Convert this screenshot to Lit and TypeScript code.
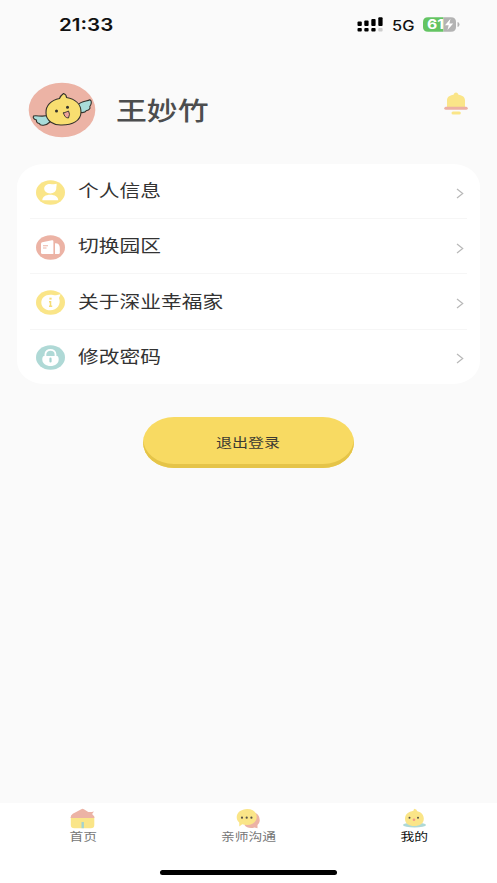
import { LitElement, html, css, svg, TemplateResult } from "lit";
import { customElement, property } from "lit/decorators.js";

const bird = html`<svg class="avatar" width="68" height="56" viewBox="0 0 68 56">
  <ellipse cx="34" cy="28" rx="33.3" ry="27.3" fill="#ecb3a5" />
  <g stroke="#34322c" stroke-width="1.1" stroke-linejoin="round" stroke-linecap="round">
    <path d="M50 23C53 18.500 59 19.500 62 17.700C64.500 19 63 23 61.800 24.500C63 27 60 28.500 58.500 28.500C57 31.500 54 31 50 30Z" fill="#a9dcda" />
    <path d="M21 33C15 35.500 9 33 5.500 34C4.500 36 6.500 37.500 8.500 38C8 40.500 10 41.500 11.500 41.500C12 44 18 44 22 40Z" fill="#a9dcda" />
    <path d="M35.500 11.500C33.500 13 32 15 31.500 16.500C23 18 17.500 24 18 31C18 39 26 43.500 34 43C44 43 53 39 53 30C53 22 47 17 38.500 15.500C38.500 13 37 12 35.500 11.500Z" fill="#f8de70" />
    <path d="M35.500 31Q38.500 30 40.500 29Q42.500 32 40.500 36Q36.500 36 35.500 31Z" fill="#eea49a" stroke-width=".9" />
  </g>
  <circle cx="28.500" cy="29" r="1.500" fill="#34322c" /><circle cx="39.500" cy="25.300" r="1.500" fill="#34322c" />
</svg>`;

const bell = html`<svg width="24" height="24" viewBox="0 0 24 24">
  <path d="M3 15V8.500C3 5 5.500 3.300 9.500 2.700C10.200 1.200 10.800 .4 12 .4C13.200 .4 13.800 1.200 14.500 2.700C18.500 3.300 21 5 21 8.500V15Z" fill="#fae588" />
  <rect x=".3" y="14.800" width="23.400" height="3" rx="1.500" fill="#ecb0a4" />
  <rect x="7.500" y="19.400" width="9.300" height="3" rx="1.500" fill="#fae588" />
</svg>`;

const glyphs: Record<string, TemplateResult> = {
  user: svg`<ellipse cx="14.500" cy="12.500" rx="14.500" ry="12.200" fill="#fae588"/>
    <path d="M20.600 3.800C20.800 5.800 20.300 6.500 20.300 8.300C20.300 11.300 17.700 13.400 14.300 13.400C10.700 13.400 8.200 11.300 8.200 8.500C8.200 5.700 10.700 3.900 14 3.900C16 3.900 18 4.700 20.600 3.800Z" fill="#fff"/>
    <path d="M6.300 20.300C6.300 16.800 9.500 14.700 14.200 14.700C18.900 14.700 22.200 16.800 22.200 20.300Z" fill="#fff"/>`,
  campus: svg`<ellipse cx="14.500" cy="12.500" rx="14.500" ry="12.200" fill="#ecb3a5"/>
    <path d="M5 8.500Q5 7.500 6.200 7.200L16 5.200Q17.400 5 17.400 6.200V19H6.500Q5 19 5 17.500Z" fill="#fff"/>
    <path d="M19 8.300Q23.800 8 23.800 13V17.500Q23.800 19 22.500 19H19Z" fill="#fff"/>
    <path d="M7 10.700H12M7 13H10.500" stroke="#ecb3a5" stroke-width="1.100"/>`,
  info: svg`<ellipse cx="14.500" cy="12.500" rx="14.500" ry="12.200" fill="#fae588"/>
    <path d="M24.500 4.300Q24 6 23 8C25.500 14 21 20.300 14.300 20.300C9 20.300 5.300 17 5.300 12.500C5.300 8 9 4.700 14.300 4.700C17 4.700 18 5.400 20 5.200Q22 5 24.500 4.300Z" fill="#fff"/>
    <rect x="13.400" y="7.700" width="2.200" height="1.900" fill="#f5dc76"/><path d="M13 11.700H14.500V16M13 16.300H16.200" fill="none" stroke="#f5dc76" stroke-width="1.500"/>`,
  lock: svg`<ellipse cx="14.500" cy="12.500" rx="14.500" ry="12.200" fill="#afd9d6"/>
    <path d="M9.400 13V9.500C9.400 3.300 19.500 3.300 19.500 9.500V13" fill="none" stroke="#fff" stroke-width="1.800"/>
    <path d="M8 11H21Q22.700 11 22.700 14.500C22.700 18.500 19 21 14.500 21C10 21 6.300 18.500 6.300 14.500Q6.300 11 8 11Z" fill="#fff"/>
    <path d="M14.500 13.700V16.500" stroke="#a5d3d0" stroke-width="2.200" stroke-linecap="round"/>`,
};

const tabGlyphs: Record<string, TemplateResult> = {
  home: svg`<path d="M.8 9H24.300V17Q24.300 20.200 20.800 20.200H4.300Q.8 20.200 .8 17Z" fill="#fae588"/>
    <path d="M.6 10Q.5 7 2.800 5.800L11.300 1.200Q12.600 .5 13.900 1.300L18.300 4Q20.800 4.300 24 3.500L22.100 6L24.300 8.500V10Z" fill="#ecb3a5"/>
    <rect x="11.500" y="14" width="2.400" height="6.200" fill="#a4d3d0"/>`,
  chat: svg`<path d="M15 5C21 3.500 24 8 23.700 13Q23.400 15.500 21.500 17V20.200L18.500 19.500C15 20.600 10 20 8.500 17Z" fill="#ecb3a5"/>
    <path d="M11.200 .9C17.200 .9 20.700 4.500 20.700 9C20.700 14 16.200 17 11.200 17Q8.200 17 6.200 16.200L3.300 18.500L3.200 14.500C1.400 13 .7 11 .7 9C.7 4.500 5.200 .9 11.200 .9Z" fill="#fae588"/>
    <g fill="#56534a"><circle cx="6" cy="9.700" r="1.100"/><circle cx="10.700" cy="9.700" r="1.100"/><circle cx="15.400" cy="9.700" r="1.100"/></g>`,
  me: svg`<ellipse cx="12.500" cy="17" rx="11.500" ry="2.400" fill="#afd9d6"/>
    <path d="M12 .8Q14.800 1.200 15.300 3.200C19.500 4 21.800 7 21.800 10.700C21.800 15.500 17.500 18 12.300 18C7 18 3 15.500 3 10.700C3 6.500 6.500 3.500 10 3.200Q12.200 3 12 .8Z" fill="#fae588"/>
    <circle cx="7.500" cy="9.700" r="1" fill="#56534a"/><circle cx="16" cy="9.700" r="1" fill="#56534a"/>
    <ellipse cx="12" cy="11.700" rx="1.300" ry="1.300" fill="#f29a86"/>`,
};

/* Text set wider than the font's natural proportions. */
@customElement("wide-text")
class WideText extends LitElement {
  static styles = css`
    :host { display: block; white-space: nowrap; line-height: 1.4; }
    .t { display: inline-block; transform: scaleX(var(--sx, 1.22)); transform-origin: var(--origin, left) center; }
  `;
  render() { return html`<span class="t"><slot></slot></span>`; }
}

@customElement("menu-row")
class MenuRow extends LitElement {
  @property() icon = "user";
  @property() label = "";
  static styles = css`
    :host { display: flex; box-sizing: border-box; height: 55.200px; align-items: center; border-bottom: 1px solid #f6f6f6; padding: 2px 3px 0 6px; }
    :host(:last-of-type) { border-bottom-color: transparent; }
    .icon { flex: none; margin-right: 12.500px; }
    wide-text { flex: 1; font-size: 17px; color: #333; margin-top: -4px; }
    .arrow { flex: none; margin-top: 2px; }
  `;
  render() {
    return html`<svg class="icon" width="29" height="25" viewBox="0 0 29 25">${glyphs[this.icon]}</svg>
      <wide-text>${this.label}</wide-text>
      <svg class="arrow" width="8" height="11" viewBox="0 0 8 11"><path d="M1 1L6.700 5.500L1 10" fill="none" stroke="#b8b8b8" stroke-width="1.200"/></svg>`;
  }
}

@customElement("app-root")
class AppRoot extends LitElement {
  static styles = css`
    :host { display: flex; flex-direction: column; box-sizing: border-box; width: 497px; height: 883px; overflow: hidden; background: #fafafa;
      font-family: "Noto Sans CJK SC", sans-serif; color: #333; }
    svg { display: block; }
    .status { display: flex; justify-content: space-between; align-items: center; height: 50px; box-sizing: border-box; padding: 0 37px 0 59px; font-family: Inter, "Liberation Sans", sans-serif; color: #111; flex: none; }
    .time { --sx: 1.21; font-size: 17px; font-weight: 600; margin-top: 2px; }
    .signals { display: flex; align-items: center; margin-top: -1px; }
    .net { --sx: 1.17; width: 22px; font-size: 14px; margin: 2px 9px 0 9px; font-weight: 500; }
    .profile { display: flex; align-items: center; height: 114px; box-sizing: border-box; padding: 3px 29px 0 28px; flex: none; }
    .avatar { margin-bottom: -2px; }
    .name { --sx: 1.21; flex: 1; margin-left: 20px; font-size: 25.500px; font-weight: 500; color: #4c4d4e; }
    .bell { margin-top: -10px; }
    .card { background: #fff; margin: 0 17px; height: 220px; box-sizing: border-box; border-radius: 27px / 23px; padding: 0 13px; flex: none; }
    .logout { align-self: center; box-sizing: border-box; width: 211px; height: 51px; margin-top: 33px; border: 0; border-radius: 31px / 25.500px; background: #f8da62; box-shadow: inset 0 -4px #e5c448;
      display: flex; align-items: center; justify-content: center; font: 13px "Noto Sans CJK SC", sans-serif; color: #3c3a32; --origin: center; --sx: 1.23; padding: 0 0 1px; }
    .tabs { margin-top: auto; height: 80px; box-sizing: border-box; background: #fff; display: grid; grid-template-columns: repeat(3, 1fr); grid-template-rows: 60px 5px; row-gap: 2px; padding: 5px 0 0; flex: none; }
    .tab { display: flex; flex-direction: column; align-items: center; font-size: 11.300px; color: #777; --origin: center; }
    .active { color: #111; }
    .home { grid-column: 1 / -1; justify-self: center; width: 177px; height: 5px; border-radius: 3px; background: #000; }
  `;
  render() {
    const rows = [["user", "个人信息"], ["campus", "切换园区"], ["info", "关于深业幸福家"], ["lock", "修改密码"]];
    const tabs = [["home", "首页"], ["chat", "亲师沟通"], ["me", "我的"]];
    return html`
      <div class="status">
        <wide-text class="time">21:33</wide-text>
        <div class="signals">
          <svg width="26" height="15" viewBox="0 0 26 15" fill="#000">
            <rect x=".5" y="4.500" width="4.300" height="4.500" rx="1"/><rect x="7.300" y="3.500" width="4.300" height="5.500" rx="1"/><rect x="14.300" y="2" width="4.300" height="7" rx="1"/><rect x="21.300" y=".3" width="4.300" height="8.700" rx="1"/>
            <rect x=".5" y="11" width="4.300" height="3.600" rx="1"/><rect x="7.300" y="11" width="4.300" height="3.600" rx="1"/><rect x="14.300" y="11" width="4.300" height="3.600" rx="1"/><rect x="21.300" y="11" width="4.300" height="3.600" rx="1" fill="#ccc"/>
          </svg>
          <wide-text class="net">5G</wide-text>
          <svg width="37" height="15" viewBox="0 0 37 15">
            <path d="M5 .3H20.500V14.700H5Q0 14.700 0 10V5Q0 .3 5 .3Z" fill="#64c463"/>
            <path d="M20.500 .3H28Q33 .3 33 5V10Q33 14.700 28 14.700H20.500Z" fill="#b3b3b3"/>
            <path d="M34.500 5Q36.500 5.300 36.500 7.500T34.500 10Z" fill="#b3b3b3"/>
            <text x="4" y="12.300" font-size="13" font-weight="700" fill="#fff" textLength="17" lengthAdjust="spacingAndGlyphs">61</text>
            <path d="M27.500 1.800L22 8.300H25.700L24.500 13L30.200 6.500H26.400Z" fill="#fff"/>
          </svg>
        </div>
      </div>
      <div class="profile">${bird}<wide-text class="name">王妙竹</wide-text><div class="bell">${bell}</div></div>
      <div class="card">${rows.map(([i, l]) => html`<menu-row icon=${i} label=${l}></menu-row>`)}</div>
      <button class="logout"><wide-text>退出登录</wide-text></button>
      <div class="tabs">
        ${tabs.map(([i, l]) => html`<div class="tab ${i === "me" ? "active" : ""}"><svg width="25" height="21" viewBox="0 0 25 21">${tabGlyphs[i]}</svg><wide-text>${l}</wide-text></div>`)}
        <div class="home"></div>
      </div>`;
  }
}
